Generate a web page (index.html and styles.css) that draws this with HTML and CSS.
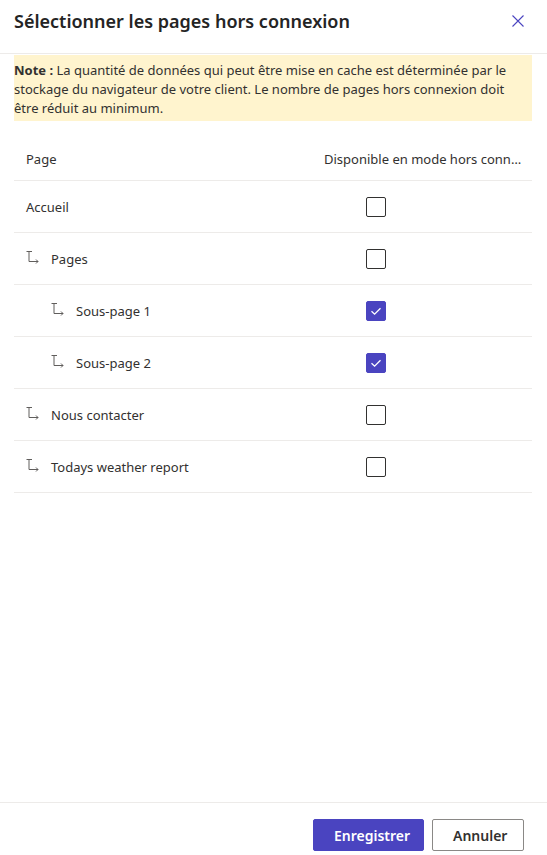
FILE: index.html
```html
<!DOCTYPE html>
<html lang="fr">
<head>
<meta charset="utf-8">
<title>Sélectionner les pages hors connexion</title>
<link rel="stylesheet" href="styles.css">
</head>
<body>
<div class="panel">
  <header class="header">
    <h1 class="title">Sélectionner les pages hors connexion</h1>
    <button class="close" aria-label="Fermer">
      <svg width="12" height="12" viewBox="0 0 12 12"><path d="M0.5 0.5 L11.5 11.5 M11.5 0.5 L0.5 11.5" stroke="#4a44c0" stroke-width="1.1" fill="none"/></svg>
    </button>
  </header>
  <main class="content">
    <div class="note"><strong>Note :</strong> La quantité de données qui peut être mise en cache est déterminée par le stockage du navigateur de votre client. Le nombre de pages hors connexion doit être réduit au minimum.</div>
    <div class="table">
      <div class="row head">
        <div class="cell name">Page</div>
        <div class="cell avail"><span class="ellip">Disponible en mode hors connexion</span></div>
      </div>
      <div class="row">
        <div class="cell name">Accueil</div>
        <div class="cell avail"><span class="cb"></span></div>
      </div>
      <div class="row">
        <div class="cell name"><svg class="arrow" width="13" height="14" viewBox="0 0 13 14"><path d="M0.5 1.5 H6 M3 1.5 V11.5 H12 M10 9.5 L12 11.5 L10 13.5" stroke="#605e5c" stroke-width="1" fill="none"/></svg>Pages</div>
        <div class="cell avail"><span class="cb"></span></div>
      </div>
      <div class="row">
        <div class="cell name lvl2"><svg class="arrow" width="13" height="14" viewBox="0 0 13 14"><path d="M0.5 1.5 H6 M3 1.5 V11.5 H12 M10 9.5 L12 11.5 L10 13.5" stroke="#605e5c" stroke-width="1" fill="none"/></svg>Sous-page 1</div>
        <div class="cell avail"><span class="cb checked"><svg width="14" height="14" viewBox="0 0 14 14"><path d="M2.5 7.2 L5.6 10.2 L11.5 4.2" stroke="#fff" stroke-width="1.3" fill="none"/></svg></span></div>
      </div>
      <div class="row">
        <div class="cell name lvl2"><svg class="arrow" width="13" height="14" viewBox="0 0 13 14"><path d="M0.5 1.5 H6 M3 1.5 V11.5 H12 M10 9.5 L12 11.5 L10 13.5" stroke="#605e5c" stroke-width="1" fill="none"/></svg>Sous-page 2</div>
        <div class="cell avail"><span class="cb checked"><svg width="14" height="14" viewBox="0 0 14 14"><path d="M2.5 7.2 L5.6 10.2 L11.5 4.2" stroke="#fff" stroke-width="1.3" fill="none"/></svg></span></div>
      </div>
      <div class="row">
        <div class="cell name"><svg class="arrow" width="13" height="14" viewBox="0 0 13 14"><path d="M0.5 1.5 H6 M3 1.5 V11.5 H12 M10 9.5 L12 11.5 L10 13.5" stroke="#605e5c" stroke-width="1" fill="none"/></svg>Nous contacter</div>
        <div class="cell avail"><span class="cb"></span></div>
      </div>
      <div class="row">
        <div class="cell name"><svg class="arrow" width="13" height="14" viewBox="0 0 13 14"><path d="M0.5 1.5 H6 M3 1.5 V11.5 H12 M10 9.5 L12 11.5 L10 13.5" stroke="#605e5c" stroke-width="1" fill="none"/></svg>Todays weather report</div>
        <div class="cell avail"><span class="cb"></span></div>
      </div>
    </div>
  </main>
  <footer class="footer">
    <button class="btn primary">Enregistrer</button>
    <button class="btn">Annuler</button>
  </footer>
</div>
</body>
</html>
```

FILE: styles.css
```css
* { box-sizing: border-box; }
html, body { margin: 0; padding: 0; background: #fff; }
body {
  font-family: "Noto Sans", "Open Sans", sans-serif;
  color: #323130;
}
.panel {
  height: 855px;
  display: flex;
  flex-direction: column;
}
.header {
  height: 54px;
  border-bottom: 1px solid #edebe9;
  display: flex;
  align-items: flex-start;
  justify-content: space-between;
  padding: 7px 23px 0 14px;
}
.title {
  margin: 0;
  font-size: 18px;
  line-height: 28px;
  font-weight: 600;
  color: #242424;
}
.close {
  border: 0;
  background: none;
  padding: 0;
  margin-top: 8px;
  width: 12px;
  height: 12px;
  display: flex;
}
.content {
  flex: 1;
  padding: 1px 15px 0 14px;
}
.note {
  background: #fff4ce;
  font-size: 13px;
  line-height: 19px;
  padding: 6px 2px 3px 0;
  color: #323130;
}
.note strong { font-weight: 700; }
.table {
  margin-top: 17px;
}
.row {
  display: grid;
  grid-template-columns: 1fr 220px;
  height: 52px;
  border-bottom: 1px solid #edebe9;
  align-items: center;
  font-size: 13px;
}
.row.head { height: 43px; }
.cell {
  padding: 0 12px;
  display: flex;
  align-items: center;
  min-width: 0;
}
.cell.avail { padding: 0 9px 0 12px; }
.ellip {
  white-space: nowrap;
  overflow: hidden;
  text-overflow: ellipsis;
}
.lvl2 { padding-left: 37px; }
.arrow { margin-right: 12px; margin-top: -3px; flex: none; }
.cb {
  width: 20px;
  height: 20px;
  border: 1px solid #323130;
  border-radius: 2px;
  margin-left: 42px;
  display: flex;
  align-items: center;
  justify-content: center;
}
.cb.checked {
  background: #4a44c0;
  border-color: #4a44c0;
}
.footer {
  height: 53px;
  border-top: 1px solid #edebe9;
  display: flex;
  justify-content: flex-end;
  align-items: flex-start;
  gap: 8px;
  padding: 16px 23px 0 0;
}
.btn {
  height: 32px;
  padding: 0 20px;
  font-family: inherit;
  font-size: 14px;
  font-weight: 600;
  border-radius: 2px;
  border: 1px solid #8a8886;
  background: #fff;
  color: #323130;
  width: 92px;
}
.btn.primary {
  background: #4a44c0;
  border-color: #4a44c0;
  color: #fff;
  width: 111px;
}
```
